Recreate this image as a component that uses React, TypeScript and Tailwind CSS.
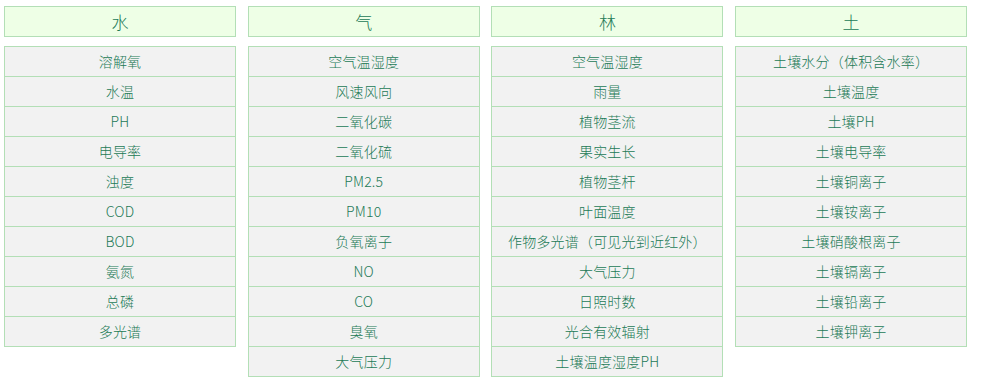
const columns = [
  {
    title: "水",
    items: ["溶解氧", "水温", "PH", "电导率", "浊度", "COD", "BOD", "氨氮", "总磷", "多光谱"],
  },
  {
    title: "气",
    items: ["空气温湿度", "风速风向", "二氧化碳", "二氧化硫", "PM2.5", "PM10", "负氧离子", "NO", "CO", "臭氧", "大气压力"],
  },
  {
    title: "林",
    items: [
      "空气温湿度",
      "雨量",
      "植物茎流",
      "果实生长",
      "植物茎杆",
      "叶面温度",
      "作物多光谱（可见光到近红外）",
      "大气压力",
      "日照时数",
      "光合有效辐射",
      "土壤温度湿度PH",
    ],
  },
  {
    title: "土",
    items: [
      "土壤水分（体积含水率）",
      "土壤温度",
      "土壤PH",
      "土壤电导率",
      "土壤铜离子",
      "土壤铵离子",
      "土壤硝酸根离子",
      "土壤镉离子",
      "土壤铅离子",
      "土壤钾离子",
    ],
  },
];

export default function App() {
  return (
    <div
      className="w-[987px] h-[384px] bg-white pl-[4px] pt-[6px] text-[#227a56] font-light"
      style={{ fontFamily: '"Microsoft YaHei", "Noto Sans CJK SC", "Noto Sans", sans-serif' }}
    >
      <div className="flex gap-x-[11.7px]">
        {columns.map((col) => (
          <div key={col.title} className="w-[232px] flex flex-col">
            <div className="h-[31px] border border-[#b3dfb6] bg-[#eeffe6] flex items-center justify-center text-[17px]">
              {col.title}
            </div>
            <div className="mt-[9px] border-x border-t border-[#b3dfb6] bg-[#f2f2f2]">
              {col.items.map((item) => (
                <div
                  key={item}
                  className="h-[30px] border-b border-[#b3dfb6] flex items-center justify-center text-[14px] tracking-[0.2px]"
                >
                  {item}
                </div>
              ))}
            </div>
          </div>
        ))}
      </div>
    </div>
  );
}
